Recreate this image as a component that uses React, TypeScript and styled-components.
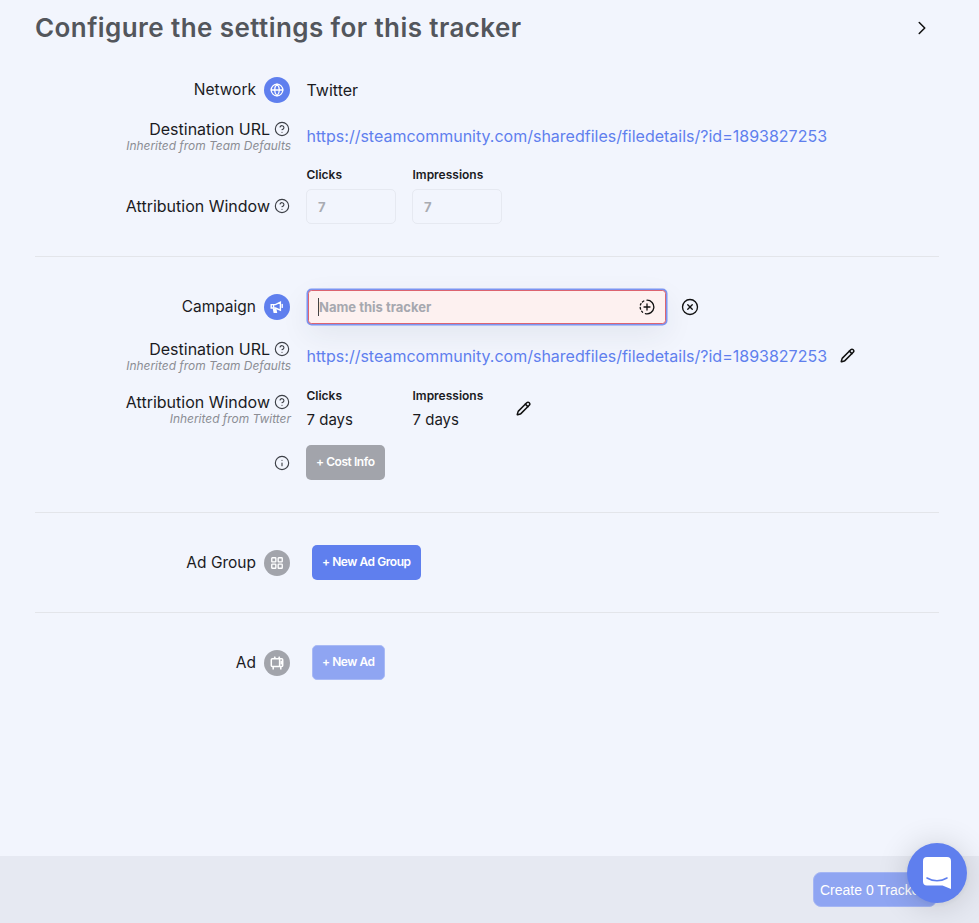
import { ReactNode } from "react"
import styled, { createGlobalStyle } from "styled-components"
import { ChevronRight, CircleHelp, CircleX, Globe, Info, LayoutGrid, Pencil } from "lucide-react"

const GlobalStyle = createGlobalStyle`
    html, body {
        margin: 0;
        padding: 0;
        background: #f2f5fd;
        overflow: hidden;
    }
    * {
        box-sizing: border-box;
    }
`

const Page = styled.div`
    height: 923px;
    display: flex;
    flex-direction: column;
    font-family: Inter, "Liberation Sans", sans-serif;
    color: #1b1b1f;
`

const Main = styled.main`
    flex: 1;
    padding: 0 40px 0 35px;
`

const Header = styled.header`
    height: 55px;
    display: flex;
    align-items: center;
    justify-content: space-between;
    padding-right: 6px;
`

const Title = styled.h1`
    margin: 0;
    font-size: 26px;
    font-weight: 600;
    letter-spacing: 0.42px;
    color: #53565c;
`

const Section = styled.section<{ $last?: boolean; $top: number }>`
    padding-top: ${p => p.$top}px;
    padding-bottom: 32px;
    display: flex;
    flex-direction: column;
    border-bottom: ${p => (p.$last ? "none" : "1px solid #e3e5ea")};
`

const Row = styled.div<{ $top?: number; $align?: string }>`
    display: grid;
    grid-template-columns: 255px auto;
    column-gap: 16px;
    align-items: ${p => p.$align ?? "center"};
    margin-top: ${p => p.$top ?? 0}px;
`

const LabelCell = styled.div<{ $pushTop?: number; $pushBottom?: number }>`
    display: flex;
    flex-direction: column;
    align-items: flex-end;
    padding-top: ${p => p.$pushTop ?? 0}px;
    padding-bottom: ${p => p.$pushBottom ?? 0}px;
`

const LabelLine = styled.div<{ $gap?: number }>`
    display: flex;
    align-items: center;
    gap: ${p => p.$gap ?? 4}px;
    min-height: 20px;
`

const Label = styled.span<{ $small?: boolean }>`
    font-size: ${p => (p.$small ? 15.5 : 16)}px;
    line-height: 20px;
    white-space: nowrap;
`

const Hint = styled.span`
    font-size: 11.95px;
    line-height: 13px;
    font-style: italic;
    color: #8b8d94;
    white-space: nowrap;
    margin-right: -1px;
`

const HelpIcon = styled.span`
    display: inline-flex;
    color: #3c3f46;
`

const Badge = styled.span<{ $active?: boolean }>`
    width: 26px;
    height: 26px;
    border-radius: 50%;
    display: inline-flex;
    align-items: center;
    justify-content: center;
    color: #fff;
    background: ${p => (p.$active ? "#5f7fee" : "#a2a4ab")};
`

const Value = styled.span<{ $large?: boolean }>`
    font-size: ${p => (p.$large ? 16 : 15)}px;
    line-height: 20px;
    padding-left: 0.5px;
`

const UrlLine = styled.div`
    display: flex;
    align-items: center;
    gap: 13px;
`

const UrlLink = styled.a`
    font-size: 16px;
    line-height: 20px;
    padding-left: 0.5px;
    color: #5f7fee;
    text-decoration: none;
    white-space: nowrap;
`

const WindowFields = styled.div`
    display: flex;
    align-items: flex-end;
    gap: 16px;
`

const WindowField = styled.div<{ $width: number }>`
    width: ${p => p.$width}px;
    display: flex;
    flex-direction: column;
`

const FieldTitle = styled.span<{ $bottom: number }>`
    font-size: 12px;
    line-height: 16px;
    font-weight: 600;
    padding: 1px 0 0 0.5px;
    margin-bottom: ${p => p.$bottom - 1}px;
`

const NumberBox = styled.div`
    height: 35px;
    padding: 0 11px;
    display: flex;
    align-items: center;
    font-size: 13px;
    font-weight: 700;
    color: #a9abb2;
    border: 1px solid #e6e9f1;
    border-radius: 5px;
`

const EditButton = styled.span<{ $bottom?: number; $left?: number }>`
    display: inline-flex;
    color: #111;
    margin-bottom: ${p => p.$bottom ?? 0}px;
    margin-left: ${p => p.$left ?? 0}px;
`

const NameRow = styled.div`
    display: flex;
    align-items: center;
    gap: 14px;
`

const NameInput = styled.div`
    width: 358px;
    height: 34px;
    margin: 1.5px;
    padding: 0 9.5px;
    display: flex;
    align-items: center;
    justify-content: space-between;
    background: #fdf1f0;
    border: 1px solid #dc6470;
    border-radius: 3.5px;
    box-shadow: 0 0 0 1.5px #7b94f1, 0 10px 30px rgba(40, 45, 70, 0.08);
`

const Placeholder = styled.span`
    font-size: 13px;
    font-weight: 700;
    color: #a6a8af;
    border-left: 1px solid #444;
    line-height: 18px;
`

const ActionButton = styled.button<{ $tone: "primary" | "muted" | "faded"; $left?: number }>`
    height: 35px;
    padding: 0 9px 2px;
    margin-left: ${p => p.$left ?? 0}px;
    justify-self: start;
    border-radius: 5px;
    border: 1px solid ${p => (p.$tone === "faded" ? "#a9baf5" : "transparent")};
    font-family: Inter, "Liberation Sans", sans-serif;
    font-size: 12px;
    font-weight: 600;
    letter-spacing: -0.45px;
    white-space: nowrap;
    color: #fff;
    background: ${p => (p.$tone === "primary" ? "#5f7fee" : p.$tone === "muted" ? "#a2a4ab" : "#8fa5f2")};
`

const Footer = styled.footer`
    height: 67px;
    padding: 16px 42px 0 0;
    display: flex;
    justify-content: flex-end;
    align-items: flex-start;
    background: #e6e9f2;
`

const CreateButton = styled.button`
    width: 124px;
    height: 35px;
    padding: 0 6px;
    overflow: hidden;
    text-align: left;
    white-space: nowrap;
    border: 1px solid #a5b6f4;
    border-radius: 8px;
    font-family: "Liberation Sans", Arial, sans-serif;
    font-size: 14px;
    color: #fff;
    background: #8fa5f2;
`

const ChatBubble = styled.div`
    position: fixed;
    right: 12px;
    bottom: 20px;
    width: 60px;
    height: 60px;
    border-radius: 50%;
    display: flex;
    align-items: center;
    justify-content: center;
    background: #5f7fee;
    box-shadow: 0 1px 6px rgba(0, 0, 0, 0.06), 0 2px 32px rgba(0, 0, 0, 0.16);
`

const MegaphoneIcon = () => (
    <svg width="14" height="14" viewBox="0 0 14 14" fill="none" stroke="#fff" strokeWidth="1.4">
        <path d="M1.2 4.6h4.2l5-2.4v8l-5-2.2H1.2z" />
        <path d="M12.2 4.4v3" strokeLinecap="round" />
        <path d="M3.4 8.4l.8 4h2.2l-.8-4" fill="#fff" />
        <path d="M3.6 4.8v3" />
    </svg>
)

const AdIcon = () => (
    <svg width="14" height="14" viewBox="0 0 14 14" fill="none" stroke="#fff" strokeWidth="1.5">
        <rect x="1.3" y="2.8" width="11.4" height="7.6" rx="1" />
        <path d="M4.4 .6l1 2.2M9.6 .6l-1 2.2M3.2 10.4v3M10.8 10.4v3" />
        <path d="M9.6 2.8v7.6" />
        <path d="M11.2 4.8v3.6" />
    </svg>
)

const DashedPlusIcon = () => (
    <svg width="16" height="16" viewBox="0 0 16 16" fill="none" stroke="#111" strokeWidth="1.3" strokeLinecap="round">
        <path d="M8 1.2a6.8 6.8 0 1 1-1.6 13.4" />
        <path d="M3.6 13.2a6.8 6.8 0 0 1-1-1M1.6 10.2a6.8 6.8 0 0 1-.4-1.8M1.4 6a6.8 6.8 0 0 1 .6-1.4M3.4 3a6.8 6.8 0 0 1 1.4-1" />
        <path d="M8 5v6M5 8h6" />
    </svg>
)

const ChatIcon = () => (
    <svg width="28" height="32" viewBox="0 0 28 32" fill="none">
        <path d="M4 0h20a4 4 0 0 1 4 4v28l-8.5-3.6H4a4 4 0 0 1-4-4V4a4 4 0 0 1 4-4z" fill="#fff" />
        <path d="M4 21c6 3.6 14 3.6 20 0" stroke="#5f7fee" strokeWidth="1.6" strokeLinecap="round" />
    </svg>
)

const Help = () => (
    <HelpIcon><CircleHelp size={16} strokeWidth={1.7} /></HelpIcon>
)

const Edit = ({ bottom, left }: { bottom?: number; left?: number }) => (
    <EditButton $bottom={bottom} $left={left}><Pencil size={15} strokeWidth={2.4} /></EditButton>
)

const LabelWithBadge = ({ label, active, children }: { label: string; active?: boolean; children: ReactNode }) => (
    <LabelCell>
        <LabelLine $gap={8}>
            <Label $small>{label}</Label>
            <Badge $active={active}>{children}</Badge>
        </LabelLine>
    </LabelCell>
)

const INHERITED_TEAM = "Inherited from Team Defaults"
const TRACKER_URL = "https://steamcommunity.com/sharedfiles/filedetails/?id=1893827253"

export default function App() {
    return <>
        <GlobalStyle />
        <Page>
            <Main>
                <Header>
                    <Title>Configure the settings for this tracker</Title>
                    <ChevronRight size={22} strokeWidth={1.7} color="#111" />
                </Header>

                <Section $top={22}>
                    <Row>
                        <LabelWithBadge label="Network" active><Globe size={14} strokeWidth={2.2} /></LabelWithBadge>
                        <Value $large>Twitter</Value>
                    </Row>
                    <Row $top={16}>
                        <LabelCell>
                            <LabelLine><Label>Destination URL</Label><Help /></LabelLine>
                            <Hint>{INHERITED_TEAM}</Hint>
                        </LabelCell>
                        <UrlLine><UrlLink>{TRACKER_URL}</UrlLink></UrlLine>
                    </Row>
                    <Row $top={14} $align="end">
                        <LabelCell $pushBottom={8}>
                            <LabelLine><Label>Attribution Window</Label><Help /></LabelLine>
                        </LabelCell>
                        <WindowFields>
                            <WindowField $width={90}>
                                <FieldTitle $bottom={7}>Clicks</FieldTitle>
                                <NumberBox>7</NumberBox>
                            </WindowField>
                            <WindowField $width={90}>
                                <FieldTitle $bottom={7}>Impressions</FieldTitle>
                                <NumberBox>7</NumberBox>
                            </WindowField>
                        </WindowFields>
                    </Row>
                </Section>

                <Section $top={31}>
                    <Row>
                        <LabelWithBadge label="Campaign" active><MegaphoneIcon /></LabelWithBadge>
                        <NameRow>
                            <NameInput>
                                <Placeholder>Name this tracker</Placeholder>
                                <DashedPlusIcon />
                            </NameInput>
                            <CircleX size={18} strokeWidth={1.8} color="#111" />
                        </NameRow>
                    </Row>
                    <Row $top={14}>
                        <LabelCell>
                            <LabelLine><Label>Destination URL</Label><Help /></LabelLine>
                            <Hint>{INHERITED_TEAM}</Hint>
                        </LabelCell>
                        <UrlLine><UrlLink>{TRACKER_URL}</UrlLink><Edit /></UrlLine>
                    </Row>
                    <Row $top={15} $align="start">
                        <LabelCell $pushTop={5}>
                            <LabelLine><Label>Attribution Window</Label><Help /></LabelLine>
                            <Hint>Inherited from Twitter</Hint>
                        </LabelCell>
                        <WindowFields>
                            <WindowField $width={90}>
                                <FieldTitle $bottom={7}>Clicks</FieldTitle>
                                <Value>7 days</Value>
                            </WindowField>
                            <WindowField $width={90}>
                                <FieldTitle $bottom={7}>Impressions</FieldTitle>
                                <Value>7 days</Value>
                            </WindowField>
                            <Edit bottom={14} left={-2} />
                        </WindowFields>
                    </Row>
                    <Row $top={15}>
                        <LabelCell>
                            <HelpIcon><Info size={16} strokeWidth={1.7} /></HelpIcon>
                        </LabelCell>
                        <ActionButton $tone="muted">+ Cost Info</ActionButton>
                    </Row>
                </Section>

                <Section $top={32}>
                    <Row>
                        <LabelWithBadge label="Ad Group"><LayoutGrid size={14} strokeWidth={2.3} /></LabelWithBadge>
                        <ActionButton $tone="primary" $left={6}>+ New Ad Group</ActionButton>
                    </Row>
                </Section>

                <Section $top={32} $last>
                    <Row>
                        <LabelWithBadge label="Ad"><AdIcon /></LabelWithBadge>
                        <ActionButton $tone="faded" $left={6}>+ New Ad</ActionButton>
                    </Row>
                </Section>
            </Main>
            <Footer>
                <CreateButton>Create 0 Trackers</CreateButton>
            </Footer>
        </Page>
        <ChatBubble><ChatIcon /></ChatBubble>
    </>
}
